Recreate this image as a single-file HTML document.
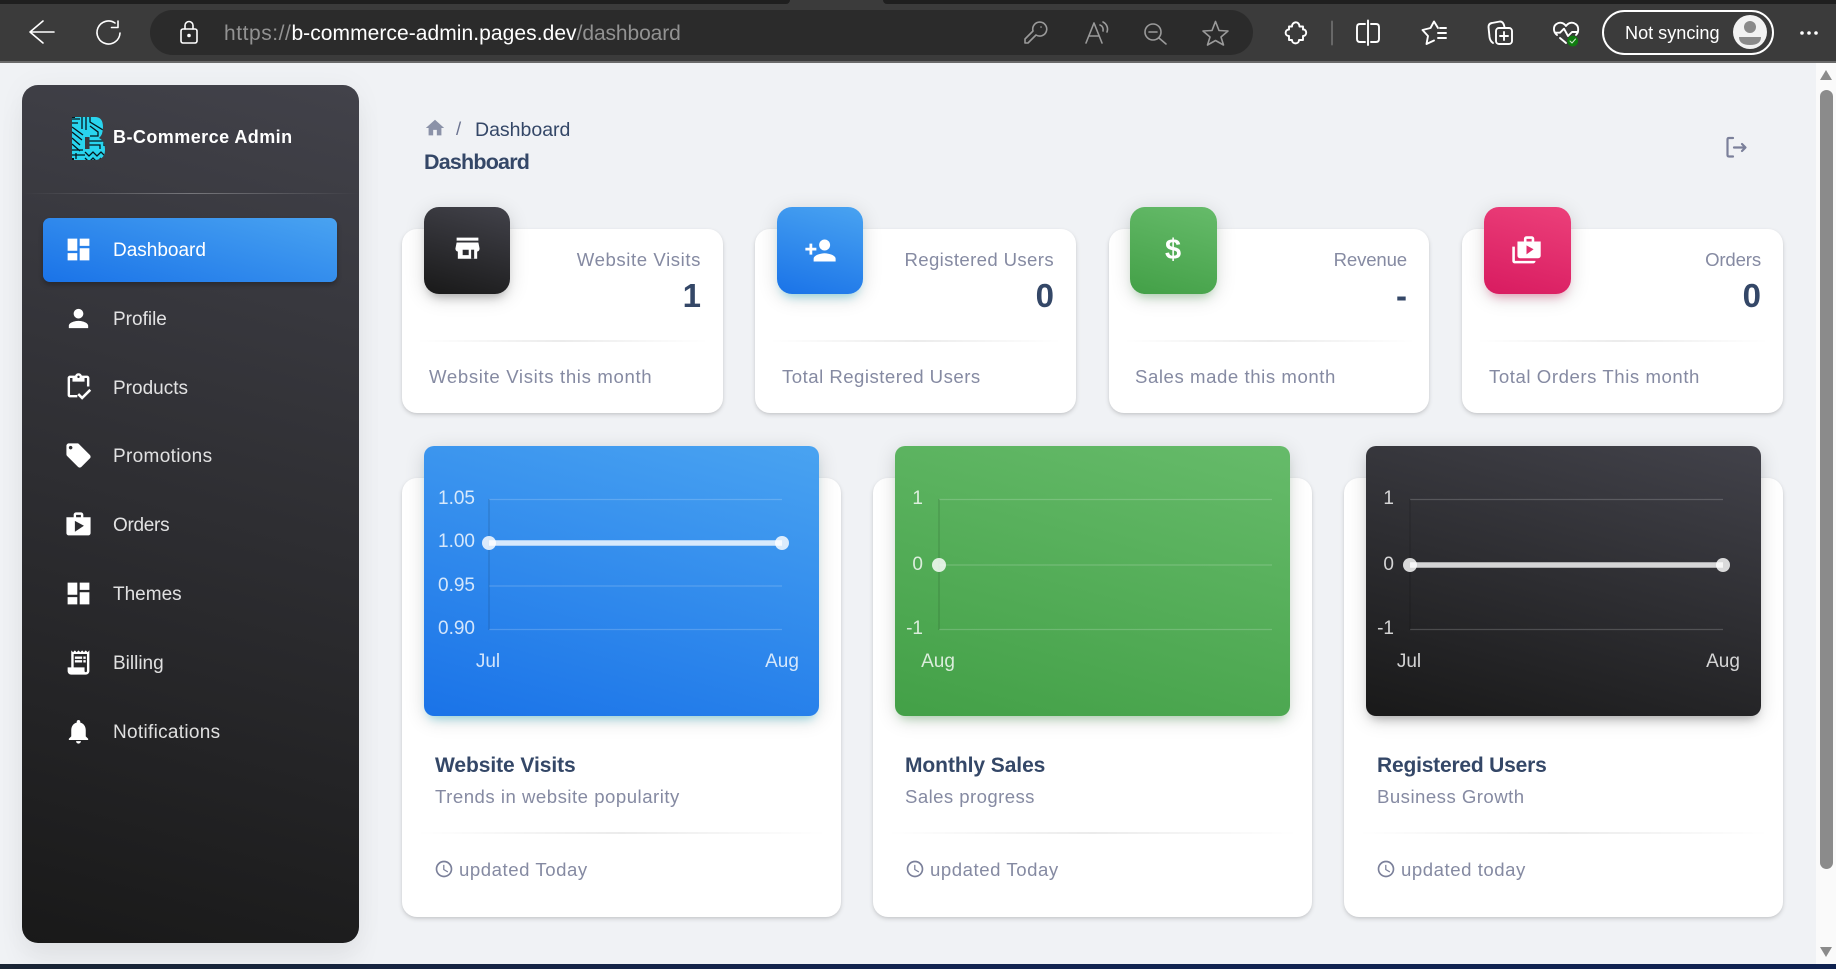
<!DOCTYPE html>
<html><head><meta charset="utf-8"><style>
*{box-sizing:border-box}
html,body{margin:0;padding:0;width:1836px;height:969px;overflow:hidden;background:#f0f2f5;font-family:"Liberation Sans",sans-serif}
.a{position:absolute}
.t{position:absolute;white-space:nowrap;line-height:24px;height:24px}
.nav{left:113px;font-size:19px;color:rgba(255,255,255,.86)}
.ic{position:absolute;fill:#fff}
.card{position:absolute;background:#fff;border-radius:15px;box-shadow:0 2px 5px rgba(0,0,0,.14),0 1px 2px rgba(0,0,0,.05)}
.box{position:absolute;top:207px;width:86px;height:87px;border-radius:15px}
.lab{font-size:18.6px;color:#858aa2;text-align:right}
.num{font-size:33px;font-weight:700;color:#344767;text-align:right}
.foot{font-size:18.6px;color:#858aa2}
.hr{position:absolute;height:2px;background:linear-gradient(90deg,rgba(0,0,0,0),rgba(0,0,0,.08),rgba(0,0,0,0))}
.ct{position:absolute;top:446px;width:395px;height:270px;border-radius:10px}
.h{font-size:21px;font-weight:700;color:#344767}
svg text{font-family:"Liberation Sans",sans-serif;font-size:19px;fill:rgba(255,255,255,.8)}
</style></head><body>

<!-- browser chrome -->
<div class="a" style="left:0;top:0;width:1836px;height:61px;background:#3b3b3b"></div>
<div class="a" style="left:0;top:0;width:790px;height:4px;background:#1f1f1f;border-bottom-right-radius:4px"></div>
<div class="a" style="left:883px;top:0;width:953px;height:4px;background:#1f1f1f;border-bottom-left-radius:4px"></div>
<div class="a" style="left:0;top:61px;width:1836px;height:2px;background:#6a6a6a"></div>
<div class="a" style="left:150px;top:10px;width:1103px;height:45px;border-radius:23px;background:#2b2b2b"></div>
<div class="t" style="left:224px;top:22px;font-size:21px;color:#929292"><span style="letter-spacing:.55px">https://</span><span style="color:#fff;letter-spacing:.06px">b-commerce-admin.pages.dev</span><span style="letter-spacing:-.1px">/dashboard</span></div>

<svg class="a" style="left:0;top:0" width="1836" height="63" fill="none" stroke="#fff" stroke-width="1.6" stroke-linecap="round" stroke-linejoin="round">
<path d="M30 32H54M43 21L30 32L43 43"/>
<path d="M115 23A11.500 11.500 0 1 0 120 33M118 21v6.500h-6.500" />
<rect x="181" y="29" width="16" height="14" rx="2"/><path d="M185 29v-3.500a4 4 0 0 1 8 0V29"/><circle cx="189" cy="35.500" r="1" fill="#fff"/>
<g stroke="#9a9a9a">
<path d="M1036 35L1028 43H1025V39L1033 31A7 7 0 1 1 1036 35ZM1041 27h.1"/>
<path d="M1086 43L1094 23L1102 43M1089 36H1099M1103 22A8 8 0 0 1 1107 32M1100 25A5 5 0 0 1 1103 31"/>
<circle cx="1153" cy="32" r="8"/><path d="M1149 32H1157M1159 38L1166 44"/>
<path d="M1215.500 21.500L1219 30.500L1228 31L1221 37L1223.500 45L1215.500 40.500L1207.500 45L1210 37L1203 31L1212 30.500Z"/>
</g>
<g stroke-width="1.900">
<path d="M1289 26.500H1292C1291.500 22 1299 20 1299.500 26.500H1303V29.500C1307 29 1307.500 36 1303 36V40H1299C1299 44.500 1292 44.500 1292 40H1289V36C1284.500 36 1284.500 29.500 1289 29.500Z"/>
<path d="M1332 21.500V44.500" stroke="#6a6a6a"/>
<path d="M1365 24H1360Q1357 24 1357 27V39Q1357 42 1360 42H1365M1371 24H1376Q1379 24 1379 27V39Q1379 42 1376 42H1371M1368 20.500V45"/>
<path d="M1438 28L1434 21.500L1430.500 28L1422.500 30L1428 36L1426.500 44L1434 40.500M1440 28H1446M1438 33H1446M1438 38H1446"/>
<path d="M1493 43Q1490 41 1489.500 37L1488.500 27Q1488.500 23.500 1492 23L1500 21.500Q1503.500 21.500 1504.500 27"/>
<rect x="1496" y="28" width="16" height="16" rx="3"/><path d="M1504 32V40M1500 36H1508"/>
<path d="M1557 35C1553 32 1553 26 1556.500 24C1560 21.500 1564 23 1566 26C1568 23 1572 21.500 1575.500 24C1579 26 1579 32 1576 35M1555 32.700H1560L1564 28.700L1568 36L1572 32H1578M1560 38L1566 43"/>
</g>
<circle cx="1572.700" cy="41" r="5.400" fill="#107c10" stroke="none"/><path d="M1570 41L1572 43L1575.500 39" stroke="#cfe8cf" stroke-width="1"/>
<rect x="1603" y="11" width="170" height="43" rx="21.500" stroke-width="2"/>
</svg>
<div class="t" style="left:1625px;top:21px;font-size:18.1px;color:#fff">Not syncing</div>
<svg class="a" style="left:1733px;top:15px" width="34" height="34"><circle cx="17" cy="17" r="17" fill="#f2f2f2"/><circle cx="17" cy="12" r="6" fill="#8a8a8a"/><path d="M6 22H28Q28 30 17 30Q6 30 6 22Z" fill="#8a8a8a"/></svg>
<svg class="a" style="left:1798px;top:29px" width="24" height="8" fill="#fff"><circle cx="4" cy="4" r="1.800"/><circle cx="11" cy="4" r="1.800"/><circle cx="18" cy="4" r="1.800"/></svg>

<!-- scrollbar -->
<div class="a" style="left:1816px;top:63px;width:20px;height:901px;background:#fafafa"></div>
<div class="a" style="left:1820px;top:90px;width:13px;height:779px;border-radius:7px;background:#8b8b8b"></div>
<svg class="a" style="left:1816px;top:63px" width="20" height="901" fill="#8b8b8b"><path d="M4 17L10 7L16 17Z"/><path d="M4 884L10 894L16 884Z"/></svg>
<div class="a" style="left:0;top:964px;width:1836px;height:5px;background:linear-gradient(90deg,#1a2535,#122450 50%,#0f2250)"></div>

<!-- sidebar -->
<div class="a" style="left:22px;top:85px;width:337px;height:858px;border-radius:16px;background:linear-gradient(195deg,#42424a,#191919);box-shadow:0 20px 27px rgba(0,0,0,.05),0 0 30px rgba(0,0,0,.04)"></div>
<svg class="a" style="left:70px;top:115px" width="38" height="47">
<defs><clipPath id="b"><path d="M2 2H25Q33 2 33 12Q33 20 29 23Q35 26 35 35Q35 45 24 45H2Z"/></clipPath></defs>
<g clip-path="url(#b)"><rect width="38" height="47" fill="#29d4ee"/>
<g fill="none" stroke="#06161c" stroke-width="1.300">
<path d="M2 4H10M2 8H8M2 12L13 20M2 17L12 25M2 23L10 30M2 29L10 36M2 35H13M2 40H15M6 44V38M12 2V14M16 2V15M20 2V7L33 15M20 11L28 17V21H20M19 26H34V31M19 30H30V34M15 37L19 41L23 37L27 41L31 37L35 41M15 43L19 47L23 43L27 47L31 43"/>
</g>
<path d="M0 0H5V3H0ZM0 43H4V47H0Z" fill="#06161c"/>
<rect x="15" y="22" width="4.500" height="12" fill="#3a3a40"/></g></svg>
<div class="t" style="left:113px;top:125px;font-size:18px;font-weight:700;color:#fff;letter-spacing:.45px">B-Commerce Admin</div>
<div class="a" style="left:22px;top:193px;width:337px;height:1px;background:linear-gradient(90deg,rgba(255,255,255,0),rgba(255,255,255,.3),rgba(255,255,255,0))"></div>
<div class="a" style="left:43px;top:218px;width:294px;height:64px;border-radius:7px;background:linear-gradient(195deg,#49a3f1,#1a73e8);box-shadow:0 3px 5px rgba(0,0,0,.25)"></div>

<svg class="ic" style="left:64px;top:235px" width="29" height="29" viewBox="0 0 24 24"><path d="M3 13h8V3H3v10zm0 8h8v-6H3v6zm10 0h8V11h-8v10zm0-18v6h8V3h-8z"/></svg>
<div class="t nav" style="top:239px;color:#fff">Dashboard</div>
<svg class="ic" style="left:64px;top:304px" width="29" height="29" viewBox="0 0 24 24"><path d="M12 12c2.210 0 4-1.790 4-4s-1.790-4-4-4-4 1.790-4 4 1.790 4 4 4zm0 2c-2.670 0-8 1.340-8 4v2h16v-2c0-2.660-5.330-4-8-4z"/></svg>
<div class="t nav" style="top:308px">Profile</div>
<svg class="ic" style="left:64px;top:372px" width="29" height="29" viewBox="0 0 24 24"><path d="M19 3h-4.180C14.400 1.840 13.300 1 12 1s-2.400.84-2.820 2H5c-1.100 0-2 .9-2 2v14c0 1.100.9 2 2 2h6v-2H5V5h2v3h10V5h2v7h2V5c0-1.100-.9-2-2-2zm-7 2c-.55 0-1-.45-1-1s.45-1 1-1 1 .45 1 1-.45 1-1 1zM22.500 15.500 21 14l-6 6-2.500-2.500L11 19l4 4z"/></svg>
<div class="t nav" style="top:377px">Products</div>
<svg class="ic" style="left:64px;top:441px" width="29" height="29" viewBox="0 0 24 24"><path d="M21.410 11.580l-9-9C12.050 2.220 11.550 2 11 2H4c-1.100 0-2 .9-2 2v7c0 .55.22 1.050.59 1.420l9 9c.36.36.86.58 1.410.58.55 0 1.050-.22 1.410-.59l7-7c.37-.36.59-.86.59-1.410 0-.55-.23-1.060-.59-1.420zM5.500 7C4.670 7 4 6.330 4 5.500S4.670 4 5.500 4 7 4.670 7 5.500 6.330 7 5.500 7z"/></svg>
<div class="t nav" style="top:445px;letter-spacing:.33px">Promotions</div>
<svg class="ic" style="left:64px;top:510px" width="29" height="29" viewBox="0 0 24 24"><path d="M16 6V4c0-1.110-.89-2-2-2h-4c-1.110 0-2 .89-2 2v2H2v13c0 1.110.89 2 2 2h16c1.110 0 2-.89 2-2V6h-6zm-6-2h4v2h-4V4zM9 18V9l7.500 4L9 18z"/></svg>
<div class="t nav" style="top:514px;letter-spacing:-.3px">Orders</div>
<svg class="ic" style="left:64px;top:579px" width="29" height="29" viewBox="0 0 24 24"><path d="M3 13h8V3H3v10zm0 8h8v-6H3v6zm10 0h8V11h-8v10zm0-18v6h8V3h-8z"/></svg>
<div class="t nav" style="top:583px">Themes</div>
<svg class="ic" style="left:64px;top:648px" width="29" height="29" viewBox="0 0 24 24"><path d="M19.500 3.500 18 2l-1.500 1.500L15 2l-1.500 1.500L12 2l-1.500 1.500L9 2 7.500 3.500 6 2v14H3v3c0 1.660 1.340 3 3 3h12c1.660 0 3-1.340 3-3V2l-1.500 1.500zM19 19c0 .55-.45 1-1 1s-1-.45-1-1v-3H8V5h11v14zM9 7h6v2H9zM16 7h2v2h-2zM9 10h6v2H9zM16 10h2v2h-2z"/></svg>
<div class="t nav" style="top:652px">Billing</div>
<svg class="ic" style="left:64px;top:717px" width="29" height="29" viewBox="0 0 24 24"><path d="M12 22c1.100 0 2-.9 2-2h-4c0 1.100.89 2 2 2zm6-6v-5c0-3.070-1.640-5.640-4.500-6.320V4c0-.83-.67-1.500-1.500-1.500s-1.500.67-1.500 1.500v.68C7.630 5.360 6 7.920 6 11v5l-2 2v1h16v-1l-2-2z"/></svg>
<div class="t nav" style="top:721px;letter-spacing:.3px">Notifications</div>

<!-- header -->
<svg class="a" style="left:424px;top:117px;fill:#8b92a8" width="22" height="22" viewBox="0 0 24 24"><path d="M10 20v-6h4v6h5v-8h3L12 3 2 12h3v8z"/></svg>
<div class="t" style="left:456px;top:117px;font-size:18.6px;color:#6b7390">/</div>
<div class="t" style="left:475px;top:118px;font-size:19.5px;color:#344767">Dashboard</div>
<div class="t" style="left:424px;top:150px;font-size:21.500px;font-weight:700;color:#344767;letter-spacing:-.8px">Dashboard</div>
<svg class="a" style="left:1724px;top:135px" width="24" height="24" fill="none" stroke="#7b809a" stroke-width="2.200" stroke-linecap="round" stroke-linejoin="round"><path d="M9 3H5Q3.500 3 3.500 4.500V20Q3.500 21.500 5 21.500H9M10 12.500H21M18 9L21.500 12.500L18 16"/></svg>

<!-- stat cards -->
<div class="card" style="left:402px;top:229px;width:321px;height:184px"></div>
<div class="card" style="left:755px;top:229px;width:321px;height:184px"></div>
<div class="card" style="left:1109px;top:229px;width:320px;height:184px"></div>
<div class="card" style="left:1462px;top:229px;width:321px;height:184px"></div>

<div class="box" style="left:424px;background:linear-gradient(195deg,#42424a,#191919);box-shadow:0 4px 20px rgba(0,0,0,.14),0 7px 10px -5px rgba(64,64,64,.4)"></div>
<div class="box" style="left:777px;background:linear-gradient(195deg,#49a3f1,#1a73e8);box-shadow:0 4px 20px rgba(0,0,0,.14),0 7px 10px -5px rgba(0,187,212,.4)"></div>
<div class="box" style="left:1130px;width:87px;background:linear-gradient(195deg,#66bb6a,#43a047);box-shadow:0 4px 20px rgba(0,0,0,.14),0 7px 10px -5px rgba(76,175,80,.4)"></div>
<div class="box" style="left:1484px;width:87px;background:linear-gradient(195deg,#ec407a,#d81b60);box-shadow:0 4px 20px rgba(0,0,0,.14),0 7px 10px -5px rgba(233,30,99,.4)"></div>

<svg class="ic" style="left:453px;top:234px" width="29" height="29" viewBox="0 0 24 24"><path d="M3 3h18v2.500H3zM3 7h18l1 5c0 1.500-1 2.500-2 2.500v6H4v-6c-1 0-2-1-2-2.500zm5 6v4.500h5V13z" fill-rule="evenodd"/><rect x="15" y="13" width="2.500" height="7.500" fill="#2d2d30"/></svg>
<svg class="ic" style="left:804px;top:234px" width="33" height="33" viewBox="0 0 24 24"><path d="M15 12c2.210 0 4-1.790 4-4s-1.790-4-4-4-4 1.790-4 4 1.790 4 4 4zm-9-2V7H4v3H1v2h3v3h2v-3h3v-2H6zm9 4c-2.670 0-8 1.340-8 4v2h16v-2c0-2.660-5.330-4-8-4z"/></svg>
<div class="t" style="left:1165px;top:238px;font-size:29px;font-weight:700;color:#fff">$</div>
<svg class="ic" style="left:1511px;top:235px" width="31" height="31" viewBox="0 0 24 24"><path d="M3 9H1v11c0 1.110.89 2 2 2h14c1.110 0 2-.89 2-2H3V9zm15-4V3c0-1.110-.89-2-2-2h-4c-1.110 0-2 .89-2 2v2H5v11c0 1.110.89 2 2 2h14c1.110 0 2-.89 2-2V5h-5zm-6-2h4v2h-4V3zm0 12V8l5.500 3-5.500 4z"/></svg>

<div class="t lab" style="right:1135px;top:248px;letter-spacing:.58px">Website Visits</div>
<div class="t lab" style="right:782px;top:248px;letter-spacing:.37px">Registered Users</div>
<div class="t lab" style="right:429px;top:248px;letter-spacing:-.15px">Revenue</div>
<div class="t lab" style="right:75px;top:248px;letter-spacing:-.15px">Orders</div>
<div class="t num" style="right:1135px;top:284px">1</div>
<div class="t num" style="right:782px;top:284px">0</div>
<div class="t num" style="right:429px;top:284px">-</div>
<div class="t num" style="right:75px;top:284px">0</div>
<div class="hr" style="left:416px;top:340px;width:293px"></div>
<div class="hr" style="left:769px;top:340px;width:293px"></div>
<div class="hr" style="left:1123px;top:340px;width:293px"></div>
<div class="hr" style="left:1476px;top:340px;width:293px"></div>
<div class="t foot" style="left:429px;top:365px;letter-spacing:.65px">Website Visits this month</div>
<div class="t foot" style="left:782px;top:365px;letter-spacing:.48px">Total Registered Users</div>
<div class="t foot" style="left:1135px;top:365px;letter-spacing:.56px">Sales made this month</div>
<div class="t foot" style="left:1489px;top:365px;letter-spacing:.56px">Total Orders This month</div>

<!-- chart cards -->
<div class="card" style="left:402px;top:478px;width:439px;height:439px"></div>
<div class="card" style="left:873px;top:478px;width:439px;height:439px"></div>
<div class="card" style="left:1344px;top:478px;width:439px;height:439px"></div>

<div class="ct" style="left:424px;background:linear-gradient(195deg,#49a3f1,#1a73e8);box-shadow:0 4px 20px rgba(0,0,0,.14),0 7px 10px -5px rgba(0,187,212,.4)"></div>
<div class="ct" style="left:895px;background:linear-gradient(195deg,#66bb6a,#43a047);box-shadow:0 4px 20px rgba(0,0,0,.14),0 7px 10px -5px rgba(76,175,80,.4)"></div>
<div class="ct" style="left:1366px;background:linear-gradient(195deg,#42424a,#191919);box-shadow:0 4px 20px rgba(0,0,0,.14),0 7px 10px -5px rgba(64,64,64,.4)"></div>

<svg class="a" style="left:424px;top:446px" width="395" height="270">
<g stroke="rgba(255,255,255,.18)" stroke-width="1.200"><path d="M65 53.500H358M65 140H358M65 183.500H358"/></g>
<path d="M65 53V184" stroke="rgba(0,0,0,.15)" stroke-width="1.200"/>
<path d="M65 97H358" stroke="rgba(255,255,255,.8)" stroke-width="5.500"/>
<circle cx="65" cy="97" r="7" fill="#fff" fill-opacity=".82"/><circle cx="358" cy="97" r="7" fill="#fff" fill-opacity=".82"/>
<g text-anchor="end"><text x="51" y="58">1.05</text><text x="51" y="101">1.00</text><text x="51" y="145">0.95</text><text x="51" y="188">0.90</text></g>
<g text-anchor="middle"><text x="64" y="221">Jul</text><text x="358" y="221">Aug</text></g>
</svg>
<svg class="a" style="left:895px;top:446px" width="395" height="270">
<g stroke="rgba(255,255,255,.18)" stroke-width="1.200"><path d="M44 53.500H377M44 119H377M44 183.500H377"/></g>
<path d="M44 53V184" stroke="rgba(0,0,0,.15)" stroke-width="1.200"/>
<circle cx="44" cy="119" r="7" fill="#fff" fill-opacity=".82"/>
<g text-anchor="end"><text x="28" y="58">1</text><text x="28" y="124">0</text><text x="28" y="188">-1</text></g>
<text x="43" y="221" text-anchor="middle">Aug</text>
</svg>
<svg class="a" style="left:1366px;top:446px" width="395" height="270">
<g stroke="rgba(255,255,255,.18)" stroke-width="1.200"><path d="M44 53.500H357M44 183.500H357"/></g>
<path d="M44 53V184" stroke="rgba(0,0,0,.15)" stroke-width="1.200"/>
<path d="M44 119H357" stroke="rgba(255,255,255,.8)" stroke-width="5.500"/>
<circle cx="44" cy="119" r="7" fill="#fff" fill-opacity=".82"/><circle cx="357" cy="119" r="7" fill="#fff" fill-opacity=".82"/>
<g text-anchor="end"><text x="28" y="58">1</text><text x="28" y="124">0</text><text x="28" y="188">-1</text></g>
<g text-anchor="middle"><text x="43" y="221">Jul</text><text x="357" y="221">Aug</text></g>
</svg>

<div class="t h" style="left:435px;top:754px;letter-spacing:-.07px">Website Visits</div>
<div class="t foot" style="left:435px;top:785px;letter-spacing:.5px">Trends in website popularity</div>
<div class="hr" style="left:416px;top:832px;width:411px"></div>
<svg class="a" style="left:434px;top:859px;fill:#7b809a" width="20" height="20" viewBox="0 0 24 24"><path d="M11.990 2C6.470 2 2 6.480 2 12s4.470 10 9.990 10C17.520 22 22 17.520 22 12S17.520 2 11.990 2zM12 20c-4.420 0-8-3.580-8-8s3.580-8 8-8 8 3.580 8 8-3.580 8-8 8zm.5-13H11v6l5.250 3.150.75-1.230-4.500-2.670z"/></svg>
<div class="t foot" style="left:459px;top:858px;letter-spacing:.54px">updated Today</div>

<div class="t h" style="left:905px;top:754px;letter-spacing:-.07px">Monthly Sales</div>
<div class="t foot" style="left:905px;top:785px;letter-spacing:.42px">Sales progress</div>
<div class="hr" style="left:887px;top:832px;width:411px"></div>
<svg class="a" style="left:905px;top:859px;fill:#7b809a" width="20" height="20" viewBox="0 0 24 24"><path d="M11.990 2C6.470 2 2 6.480 2 12s4.470 10 9.990 10C17.520 22 22 17.520 22 12S17.520 2 11.990 2zM12 20c-4.420 0-8-3.580-8-8s3.580-8 8-8 8 3.580 8 8-3.580 8-8 8zm.5-13H11v6l5.250 3.150.75-1.230-4.500-2.670z"/></svg>
<div class="t foot" style="left:930px;top:858px;letter-spacing:.54px">updated Today</div>

<div class="t h" style="left:1377px;top:754px;letter-spacing:-.2px">Registered Users</div>
<div class="t foot" style="left:1377px;top:785px;letter-spacing:.47px">Business Growth</div>
<div class="hr" style="left:1358px;top:832px;width:411px"></div>
<svg class="a" style="left:1376px;top:859px;fill:#7b809a" width="20" height="20" viewBox="0 0 24 24"><path d="M11.990 2C6.470 2 2 6.480 2 12s4.470 10 9.990 10C17.520 22 22 17.520 22 12S17.520 2 11.990 2zM12 20c-4.420 0-8-3.580-8-8s3.580-8 8-8 8 3.580 8 8-3.580 8-8 8zm.5-13H11v6l5.250 3.150.75-1.230-4.500-2.670z"/></svg>
<div class="t foot" style="left:1401px;top:858px;letter-spacing:.54px">updated today</div>

</body></html>
